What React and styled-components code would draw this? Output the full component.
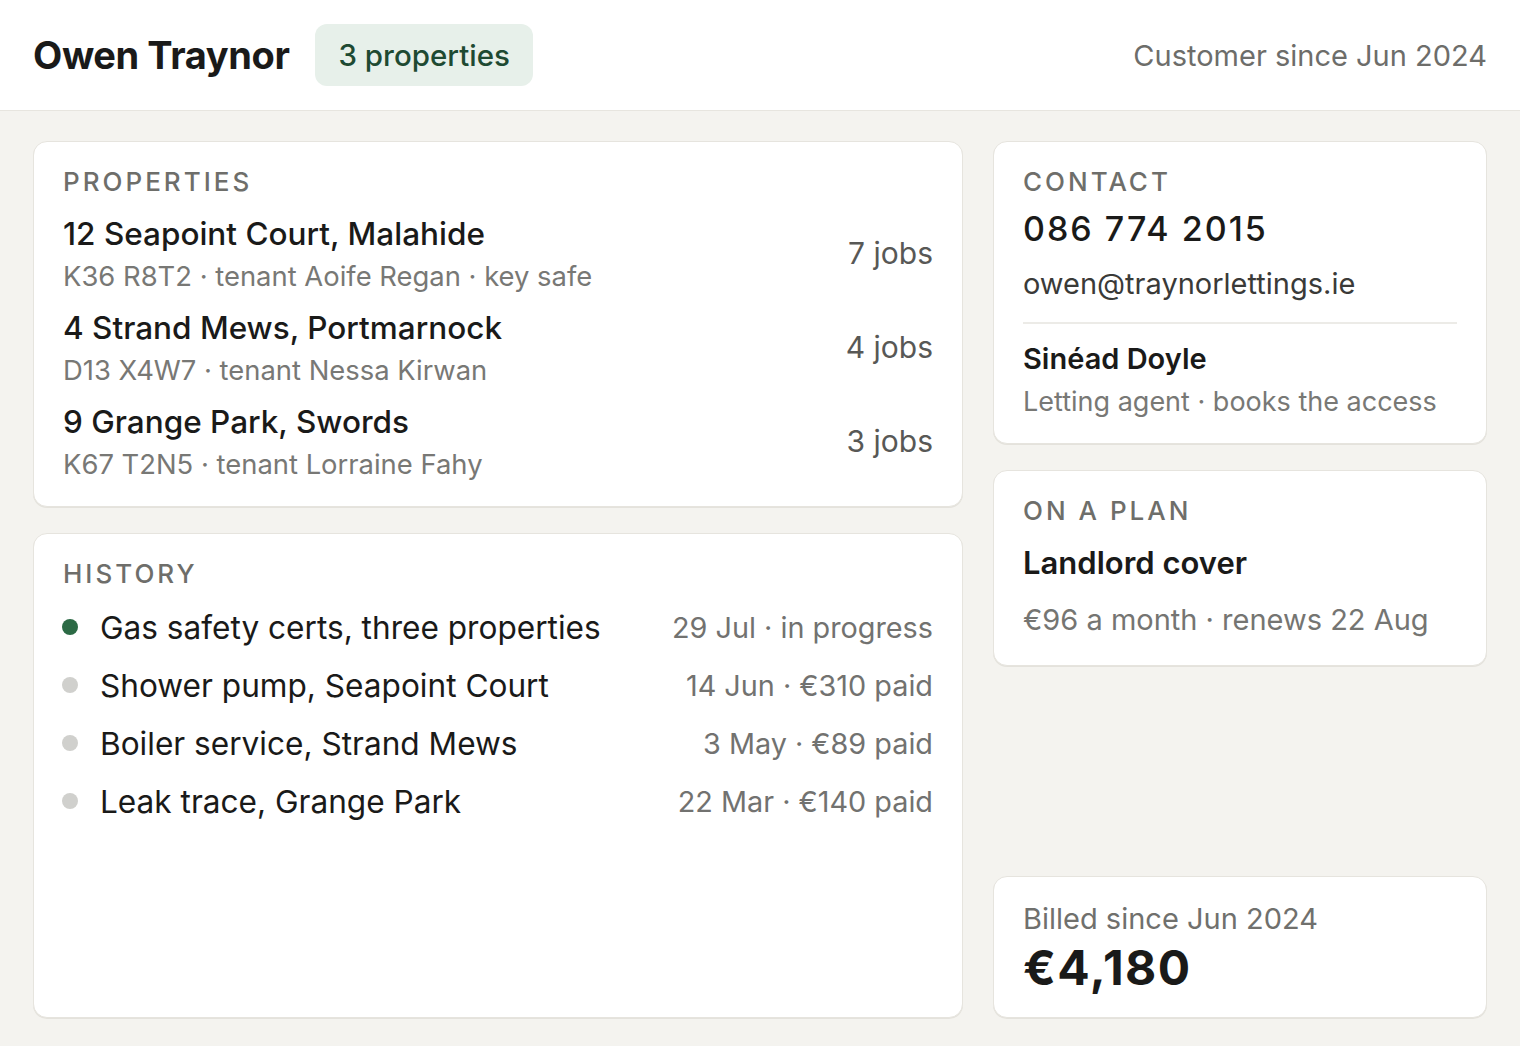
import React from "react";
import styled, { createGlobalStyle } from "styled-components";

const GlobalStyle = createGlobalStyle`
  html, body {
    margin: 0;
    padding: 0;
    background: #f4f3ef;
  }
  body {
    font-family: Inter, "Liberation Sans", sans-serif;
    color: #1b1b1a;
  }
  * {
    box-sizing: border-box;
  }
`;

const properties = [
  { title: "12 Seapoint Court, Malahide", sub: "K36 R8T2 · tenant Aoife Regan · key safe", jobs: 7 },
  { title: "4 Strand Mews, Portmarnock", sub: "D13 X4W7 · tenant Nessa Kirwan", jobs: 4 },
  { title: "9 Grange Park, Swords", sub: "K67 T2N5 · tenant Lorraine Fahy", jobs: 3 },
];

const history = [
  { text: "Gas safety certs, three properties", meta: "29 Jul · in progress", active: true },
  { text: "Shower pump, Seapoint Court", meta: "14 Jun · €310 paid" },
  { text: "Boiler service, Strand Mews", meta: "3 May · €89 paid" },
  { text: "Leak trace, Grange Park", meta: "22 Mar · €140 paid" },
];

const App = () => {
  return (
    <Page>
      <GlobalStyle />
      <Header>
        <Name>Owen Traynor</Name>
        <Badge>3 properties</Badge>
        <Since>Customer since Jun 2024</Since>
      </Header>
      <Main>
        <Column>
          <Card $pb={23}>
            <Label>Properties</Label>
            <PropertyList>
              {properties.map((p) => (
                <PropertyRow key={p.title}>
                  <div>
                    <PropertyTitle>{p.title}</PropertyTitle>
                    <PropertySub>{p.sub}</PropertySub>
                  </div>
                  <Jobs>{p.jobs} jobs</Jobs>
                </PropertyRow>
              ))}
            </PropertyList>
          </Card>
          <Card $grow>
            <Label>History</Label>
            <HistoryList>
              {history.map((h) => (
                <HistoryRow key={h.text}>
                  <Dot $active={h.active} />
                  <HistoryText>{h.text}</HistoryText>
                  <HistoryMeta>{h.meta}</HistoryMeta>
                </HistoryRow>
              ))}
            </HistoryList>
          </Card>
        </Column>
        <Column>
          <Card $pb={21}>
            <Label>Contact</Label>
            <Phone>086 774 2015</Phone>
            <Email>owen@traynorlettings.ie</Email>
            <Divider />
            <Person>Sinéad Doyle</Person>
            <Muted>Letting agent · books the access</Muted>
          </Card>
          <Card $pb={25}>
            <Label>On a plan</Label>
            <PlanName>Landlord cover</PlanName>
            <PlanMeta>€96 a month · renews 22 Aug</PlanMeta>
          </Card>
          <Card $bottom $pb={24}>
            <BilledLabel>Billed since Jun 2024</BilledLabel>
            <Total>€4,180</Total>
          </Card>
        </Column>
      </Main>
    </Page>
  );
};

export default App;

const Page = styled.div`
  display: flex;
  flex-direction: column;
  min-height: 100vh;
`;

const Header = styled.header`
  height: 111px;
  display: flex;
  align-items: center;
  gap: 26px;
  padding: 0 33px;
  background: #ffffff;
  border-bottom: 1px solid #e7e5df;
`;

const Name = styled.h1`
  margin: 0;
  font-size: 38px;
  font-weight: 700;
  letter-spacing: -0.4px;
  color: #1a1a19;
`;

const Badge = styled.span`
  display: inline-flex;
  align-items: center;
  height: 62px;
  padding: 0 23px;
  border-radius: 12px;
  background: #e7f0ea;
  color: #1e4a32;
  font-size: 29.5px;
  font-weight: 500;
`;

const Since = styled.span`
  margin-left: auto;
  font-size: 29px;
  color: #6d6d6a;
`;

const Main = styled.main`
  flex: 1;
  display: grid;
  grid-template-columns: 930px 494px;
  gap: 30px;
  padding: 30px 33px 28px;
`;

const Column = styled.div`
  display: flex;
  flex-direction: column;
  gap: 26px;
`;

const Card = styled.section`
  display: flex;
  flex-direction: column;
  background: #ffffff;
  border: 1px solid #e6e4de;
  border-radius: 14px;
  box-shadow: 0 1px 0 #e4e2dc;
  padding: 24px 29px ${(p) => p.$pb ?? 26}px;
  flex: ${(p) => (p.$grow ? 1 : "none")};
  margin-top: ${(p) => (p.$bottom ? "auto" : 0)};
`;

const Label = styled.div`
  font-size: 26px;
  font-weight: 500;
  letter-spacing: 3px;
  text-transform: uppercase;
  color: #6e6e6a;
  margin-bottom: 12px;
`;

const PropertyList = styled.div`
  display: flex;
  flex-direction: column;
  gap: 10px;
  margin-top: 2px;
`;

const PropertyRow = styled.div`
  display: flex;
  align-items: center;
  justify-content: space-between;
`;

const PropertyTitle = styled.div`
  font-size: 31.5px;
  font-weight: 500;
  color: #1a1a19;
  line-height: 46px;
`;

const PropertySub = styled.div`
  font-size: 27.4px;
  color: #787875;
  line-height: 38px;
`;

const Muted = styled.div`
  font-size: 27px;
  color: #787875;
  line-height: 40px;
  margin-top: 2px;
`;

const Jobs = styled.div`
  font-size: 30px;
  color: #585856;
`;

const HistoryList = styled.div`
  display: flex;
  flex-direction: column;
  gap: 14px;
  margin-top: 4px;
`;

const HistoryRow = styled.div`
  display: flex;
  align-items: center;
  height: 44px;
`;

const Dot = styled.span`
  width: 16px;
  height: 16px;
  border-radius: 50%;
  flex: none;
  margin-right: 22px;
  margin-left: -1px;
  background: ${(p) => (p.$active ? "#2c6a45" : "#d0d0cd")};
`;

const HistoryText = styled.span`
  font-size: 31.6px;
  color: #1a1a19;
`;

const HistoryMeta = styled.span`
  margin-left: auto;
  font-size: 28.8px;
  color: #727270;
`;

const Phone = styled.div`
  font-size: 34px;
  font-weight: 500;
  letter-spacing: 2px;
  color: #1a1a19;
  line-height: 40px;
`;

const Email = styled.div`
  font-size: 29px;
  color: #3a3a38;
  margin-top: 15px;
  line-height: 40px;
`;

const Divider = styled.hr`
  width: 100%;
  margin: 18px 0 14px;
  border: none;
  border-top: 2px solid #ecebe7;
`;

const Person = styled.div`
  font-size: 29px;
  font-weight: 600;
  color: #1a1a19;
  line-height: 42px;
`;

const PlanName = styled.div`
  font-size: 31px;
  font-weight: 600;
  color: #1a1a19;
  line-height: 44px;
  margin-top: 3px;
`;

const PlanMeta = styled.div`
  font-size: 29px;
  color: #757572;
  margin-top: 15px;
  line-height: 40px;
`;

const BilledLabel = styled.div`
  font-size: 29px;
  color: #70706d;
  line-height: 40px;
  margin-top: -2px;
`;

const Total = styled.div`
  font-size: 48px;
  font-weight: 700;
  letter-spacing: 1.5px;
  color: #1a1a19;
  line-height: 50px;
  margin-top: 4px;
`;
